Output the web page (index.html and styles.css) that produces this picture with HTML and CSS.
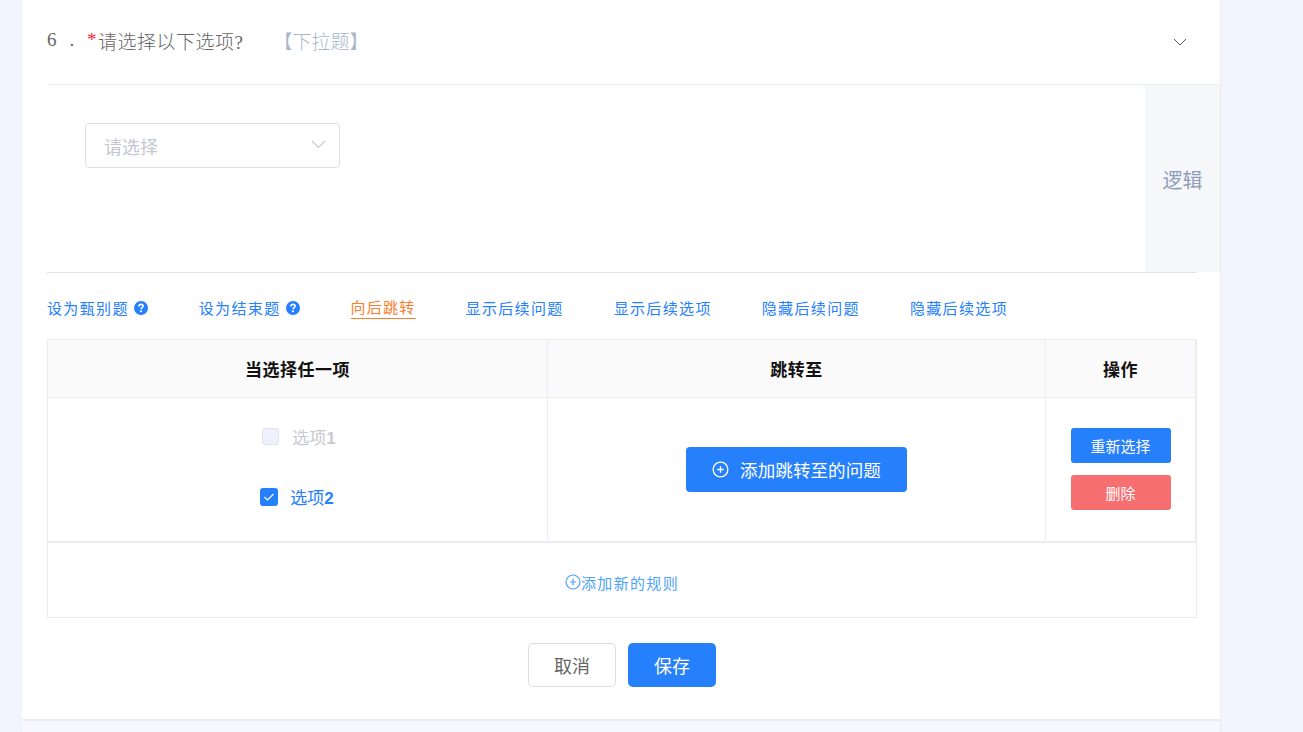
FILE: index.html
```html
<!DOCTYPE html>
<html lang="zh-CN">
<head>
    <meta charset="UTF-8">
    <title>逻辑设置</title>
    <link rel="stylesheet" href="styles.css">
</head>
<body>
    <div class="card">
        <!-- 题目标题 -->
        <div class="q-head">
            <div class="q-title">
                <span class="q-num">6 .</span><span class="q-star">*</span><span>请选择以下选项?</span><span class="q-type">【下拉题】</span>
            </div>
            <svg class="q-arrow" width="14" height="8" viewBox="0 0 14 8"><path d="M1 1l6 6 6-6" fill="none" stroke="#555" stroke-width="1"/></svg>
        </div>

        <div class="q-body">
            <div class="q-main">
                <div class="select">
                    <span>请选择</span>
                    <svg width="15" height="9" viewBox="0 0 15 9"><path d="M1 1l6.5 6.5L14 1" fill="none" stroke="#c8cbd6" stroke-width="1.2"/></svg>
                </div>
            </div>
            <div class="logic-tab">逻辑</div>
        </div>

        <div class="logic">
            <div class="tabs">
                <a class="tab">设为甄别题
                    <svg class="help" width="14" height="14" viewBox="0 0 14 14"><circle cx="7" cy="7" r="7" fill="#2680fb"/><path d="M4.9 5.4c0-1.3.9-2 2.1-2s2.1.7 2.1 1.8c0 1.5-2.1 1.5-2.1 3" fill="none" stroke="#fff" stroke-width="1.6"/><rect x="6.1" y="9.4" width="1.8" height="1.7" fill="#fff"/></svg>
                </a>
                <a class="tab">设为结束题
                    <svg class="help" width="14" height="14" viewBox="0 0 14 14"><circle cx="7" cy="7" r="7" fill="#2680fb"/><path d="M4.9 5.4c0-1.3.9-2 2.1-2s2.1.7 2.1 1.8c0 1.5-2.1 1.5-2.1 3" fill="none" stroke="#fff" stroke-width="1.6"/><rect x="6.1" y="9.4" width="1.8" height="1.7" fill="#fff"/></svg>
                </a>
                <a class="tab active">向后跳转</a>
                <a class="tab">显示后续问题</a>
                <a class="tab">显示后续选项</a>
                <a class="tab">隐藏后续问题</a>
                <a class="tab">隐藏后续选项</a>
            </div>

            <div class="rules">
                <div class="rule-grid">
                    <div class="th">当选择任一项</div>
                    <div class="th">跳转至</div>
                    <div class="th">操作</div>
                    <div class="td options">
                        <label class="opt disabled"><i class="box"></i><span>选项<b>1</b></span></label>
                        <label class="opt checked">
                            <i class="box"><svg width="12" height="10" viewBox="0 0 12 10"><path d="M1.5 5l3 3 6-6" fill="none" stroke="#fff" stroke-width="1.1"/></svg></i><span>选项<b>2</b></span>
                        </label>
                    </div>
                    <div class="td jump">
                        <button class="btn-add">
                            <svg width="17" height="17" viewBox="0 0 18 18"><circle cx="9" cy="9" r="7.8" fill="none" stroke="#fff" stroke-width="1.4"/><path d="M9 5.5v7M5.5 9h7" stroke="#fff" stroke-width="1.4"/></svg>
                            添加跳转至的问题
                        </button>
                    </div>
                    <div class="td actions">
                        <button class="btn-sm blue">重新选择</button>
                        <button class="btn-sm red">删除</button>
                    </div>
                </div>
                <div class="add-rule">
                    <svg width="16" height="16" viewBox="0 0 16 16"><circle cx="8" cy="8" r="7" fill="none" stroke="#4ea3f8" stroke-width="1.2"/><path d="M8 4.8v6.4M4.8 8h6.4" stroke="#4ea3f8" stroke-width="1.2"/></svg>添加新的规则
                </div>
            </div>

            <div class="footer-btns">
                <button class="btn cancel">取消</button>
                <button class="btn save">保存</button>
            </div>
        </div>
    </div>
    <div class="next-card"></div>
</body>
</html>
```

FILE: styles.css
```css
html, body { height: 100%; }
body { margin: 0; height: 732px; overflow: hidden; background: #f2f5fd; font-family: "Liberation Sans", "Noto Sans CJK SC", sans-serif; }
button { font-family: inherit; border: none; cursor: pointer; padding: 0; }

.card { width: 1198px; height: 719px; margin-left: 22px; background: #fff; border-right: 1px solid #e8ebf4; border-bottom: 2px solid #e9ecf5; }
.next-card { width: 1198px; height: 11px; margin-left: 22px; background: #f8f9fe; border-right: 1px solid #e8ebf4; }

/* 题目标题 */
.q-head { height: 84px; margin-left: 25px; display: flex; align-items: center; justify-content: space-between; border-bottom: 1px solid #e9ecf5; padding-right: 33px; }
.q-title { display: flex; align-items: center; margin-top: -4px; font-size: 19px; font-weight: 300; letter-spacing: .5px; color: #666; font-family: "Liberation Serif", "Noto Sans CJK SC", serif; }
.q-num { width: 40px; white-space: pre; word-spacing: 5px; letter-spacing: 1.6px; }
.q-star { color: #f5222d; width: 11px; }
.q-type { color: #a9b7c9; margin-left: 30px; letter-spacing: 0; }

.q-body { height: 187px; margin-left: 25px; display: flex; justify-content: space-between; }
.q-main { padding: 38px 0 0 38px; }
.select { width: 222px; height: 43px; border: 1px solid #dcdee6; border-radius: 4px; display: flex; align-items: center; justify-content: space-between; padding: 0 13px 0 18px; font-size: 18px; color: #c5c8d2; }
.select svg { margin-top: -2px; }
.logic-tab { width: 75px; box-sizing: border-box; padding-top: 2px; background: #f6f7f9; color: #8f9bb8; font-size: 20px; display: flex; align-items: center; justify-content: center; }

.logic { margin: 0 23px 0 25px; border-top: 1px solid #dfe2ec; }
.tabs { height: 66px; box-sizing: border-box; padding-top: 2px; display: flex; align-items: center; gap: 50px; font-size: 15px; letter-spacing: 1.35px; color: #2680fb; }
.tab { display: flex; align-items: center; gap: 5px; }
.tab .help { flex: none; margin-right: 1px; margin-top: 1px; }
.tab.active { color: #f77f30; border-bottom: 1px solid #f77f30; letter-spacing: 1.25px; line-height: 20px; padding-top: 2px; }

/* 规则表格 */
.rules { border: 1px solid #ebedf3; }
.rule-grid { display: grid; grid-template-columns: 500px 498px 150px; grid-template-rows: 58px 143px; border-bottom: 2px solid #ebedf3; }
.th { background: #fafafa; display: flex; align-items: center; justify-content: center; font-size: 17px; letter-spacing: .5px; font-weight: bold; color: #111; border-bottom: 1px solid #ebedf3; border-right: 1px solid #ebedf3; }
.td { border-right: 1px solid #ebedf3; }

.options { display: flex; flex-direction: column; align-items: center; padding-top: 22px; gap: 27px; }
.opt { display: flex; align-items: center; height: 33px; font-size: 17px; }
.opt .box { display: flex; align-items: center; justify-content: center; border-radius: 3px; box-sizing: border-box; }
.opt.disabled { color: #c7cad3; gap: 13px; margin-left: 3px; }
.opt.disabled .box { width: 17px; height: 17px; background: #eef1fb; border: 1px solid #dfe3ee; }
.opt.checked { color: #2680fb; gap: 12px; margin-left: -1px; }
.opt.checked .box { width: 18px; height: 18px; background: #2680fb; }

.jump { display: flex; align-items: center; justify-content: center; padding-bottom: 1px; }
.btn-add { width: 221px; height: 45px; background: #2680fb; color: #fff; font-size: 17.6px; border-radius: 4px; display: flex; align-items: center; justify-content: center; gap: 11px; }

.actions { display: flex; flex-direction: column; align-items: center; gap: 12px; padding-top: 30px; }
.btn-sm { width: 100px; height: 35px; border-radius: 3px; color: #fff; font-size: 15px; }
.btn-sm.blue { background: #2680fb; }
.btn-sm.red { background: #f76e70; }

.add-rule { height: 74px; box-sizing: border-box; padding-top: 4px; display: flex; align-items: center; justify-content: center; font-size: 15px; letter-spacing: 1.35px; color: #4ea3f8; }

.footer-btns { display: flex; justify-content: center; gap: 12px; margin-top: 25px; }
.btn { width: 88px; height: 44px; border-radius: 5px; font-size: 18px; box-sizing: border-box; }
.btn.cancel { background: #fff; border: 1px solid #dcdee6; color: #666; }
.btn.save { background: #2680fb; color: #fff; }
```
